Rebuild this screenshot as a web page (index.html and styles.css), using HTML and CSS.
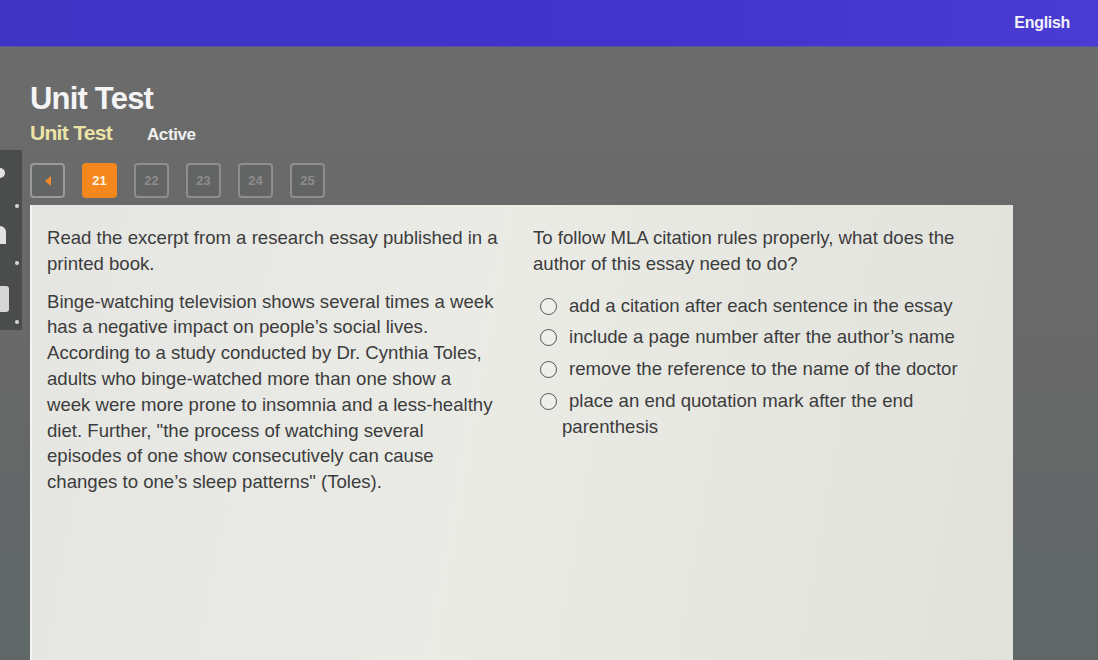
FILE: index.html
```html
<!DOCTYPE html>
<html lang="en">
<head>
<meta charset="utf-8">
<title>Unit Test</title>
<link rel="stylesheet" href="styles.css">
</head>
<body>
<header class="topbar">
  <span class="lang">English</span>
</header>
<div class="page">
  <aside class="side-strip">
    <span class="side-icon side-icon-a"></span>
    <span class="side-icon side-icon-b"></span>
    <span class="side-icon side-icon-c"></span>
    <span class="side-dot side-dot-1"></span>
    <span class="side-dot side-dot-2"></span>
    <span class="side-dot side-dot-3"></span>
  </aside>
  <main class="main">
    <h1 class="title">Unit Test</h1>
    <div class="subtitle">
      <span class="sub-name">Unit Test</span>
      <span class="sub-status">Active</span>
    </div>
    <nav class="pager">
      <button class="pg pg-back"><svg width="10" height="12" viewBox="0 0 10 12"><path d="M8 1 L2 6 L8 11 Z" fill="#f08a2a"/></svg></button>
      <button class="pg pg-active">21</button>
      <button class="pg">22</button>
      <button class="pg">23</button>
      <button class="pg">24</button>
      <button class="pg">25</button>
    </nav>
    <section class="card">
      <div class="col col-left">
        <p>Read the excerpt from a research essay published in a printed book.</p>
        <p class="excerpt">Binge-watching television shows several times a week has a negative impact on people’s social lives. According to a study conducted by Dr. Cynthia Toles, adults who binge-watched more than one show a week were more prone to insomnia and a less-healthy diet. Further, "the process of watching several episodes of one show consecutively can cause changes to one’s sleep patterns" (Toles).</p>
      </div>
      <div class="col col-right">
        <p>To follow MLA citation rules properly, what does the author of this essay need to do?</p>
        <ul class="options">
          <li><span class="radio"></span>add a citation after each sentence in the essay</li>
          <li><span class="radio"></span>include a page number after the author’s name</li>
          <li><span class="radio"></span>remove the reference to the name of the doctor</li>
          <li><span class="radio"></span>place an end quotation mark after the end parenthesis</li>
        </ul>
      </div>
    </section>
  </main>
</div>
</body>
</html>
```

FILE: styles.css
```css
* { box-sizing: border-box; }
html, body { margin: 0; padding: 0; }
body {
  width: 1098px;
  height: 660px;
  overflow: hidden;
  font-family: "Liberation Sans", Arial, sans-serif;
  background: linear-gradient(180deg, #6c6c6c 0%, #676868 60%, #5f6767 100%);
}
.topbar {
  height: 47px;
  background: linear-gradient(90deg, #3e34c4 0%, #4233cc 60%, #4a3bd2 100%);
  display: flex;
  align-items: center;
  justify-content: flex-end;
  padding-right: 28px;
  border-bottom: 1px solid #5a55a0;
}
.lang {
  color: #f2f2f8;
  font-weight: bold;
  font-size: 16px;
  letter-spacing: -0.3px;
}
.page {
  position: relative;
  display: flex;
}
.side-strip {
  position: absolute;
  left: 0;
  top: 103px;
  width: 22px;
  height: 180px;
  background: #4b4d4d;
}
.side-icon {
  position: absolute;
  background: #e2e2e2;
}
.side-icon-a {
  left: 0; top: 18px; width: 5px; height: 10px;
  border-radius: 0 6px 6px 0;
}
.side-icon-b {
  left: 0; top: 76px; width: 6px; height: 18px;
  border-radius: 0 8px 0 0;
}
.side-icon-c {
  left: 0; top: 136px; width: 9px; height: 26px;
  border-radius: 0 3px 3px 0;
  background: #d6d6d6;
}
.side-dot {
  position: absolute;
  left: 15px;
  width: 4px;
  height: 4px;
  border-radius: 50%;
  background: #d8d8d8;
}
.side-dot-1 { top: 54px; }
.side-dot-2 { top: 111px; }
.side-dot-3 { top: 170px; }
.main {
  padding-left: 30px;
  padding-top: 34px;
  width: 1013px;
}
.title {
  margin: 0;
  color: #f4f4f4;
  font-size: 31px;
  font-weight: bold;
  letter-spacing: -0.8px;
  line-height: 36px;
}
.subtitle {
  display: flex;
  align-items: baseline;
  gap: 35px;
  margin-top: 4px;
  height: 28px;
}
.sub-name {
  color: #ece3a6;
  font-weight: bold;
  font-size: 21px;
  letter-spacing: -0.7px;
}
.sub-status {
  color: #f0f0f0;
  font-weight: bold;
  font-size: 17px;
  letter-spacing: -0.4px;
}
.pager {
  display: flex;
  gap: 17px;
  margin-top: 14px;
  height: 35px;
}
.pg {
  width: 35px;
  height: 35px;
  border: 2px solid #8e8e8e;
  border-radius: 4px;
  background: #636565;
  color: #8c8c8c;
  font-family: "Liberation Sans", Arial, sans-serif;
  font-size: 13px;
  font-weight: bold;
  display: flex;
  align-items: center;
  justify-content: center;
  padding: 0;
}
.pg-back { border-color: #9a9a9a; }
.pg-active {
  background: #f5871f;
  border-color: #f5871f;
  color: #fff3e4;
}
.card {
  margin-top: 7px;
  height: 460px;
  background: linear-gradient(100deg, #e5e6e2 0%, #ebebe6 45%, #e2e2dd 100%);
  border-left: 2px solid #f4f4f2;
  display: flex;
  padding: 20px 0 0 15px;
  color: #3c3c3c;
  font-size: 18.6px;
  line-height: 25.8px;
}
.col p { margin: 0; }
.col-left {
  width: 486px;
  padding-right: 34px;
  flex: none;
}
.excerpt { margin-top: 12px !important; }
.col-right {
  width: 460px;
  flex: none;
}
.options {
  list-style: none;
  margin: 16px 0 0 7px;
  padding: 0;
  width: 420px;
}
.options li {
  position: relative;
  padding-left: 22px;
  text-indent: 7px;
  line-height: 25.8px;
  margin-bottom: 6px;
}
.radio {
  position: absolute;
  left: 0;
  top: 5px;
  width: 17px;
  height: 17px;
  border: 1.5px solid #555;
  border-radius: 50%;
  background: #eeeeea;
}
```
